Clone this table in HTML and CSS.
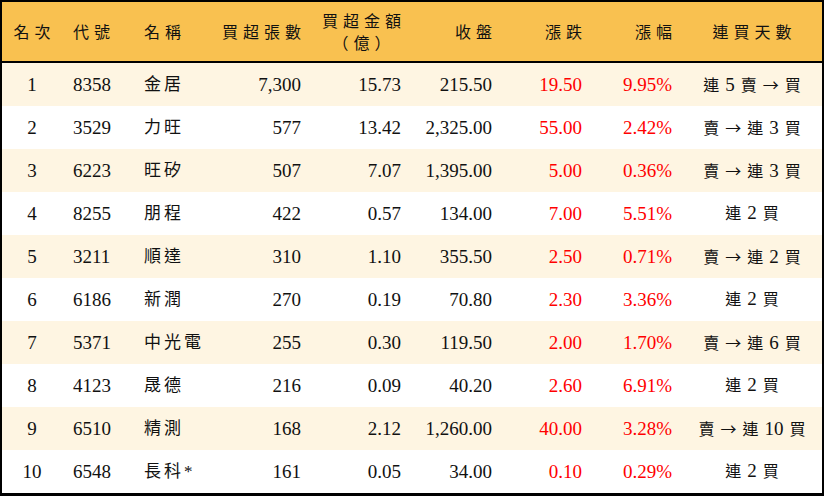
FILE: index.html
```html
<!DOCTYPE html>
<html lang="zh-Hant">
<head>
<meta charset="utf-8">
<link rel="stylesheet" href="styles.css">
</head>
<body>
<table class="rank">
  <colgroup>
    <col class="c1"><col class="c2"><col class="c3"><col class="c4"><col class="c5"><col class="c6"><col class="c7"><col class="c8"><col class="c9">
  </colgroup>
  <thead>
    <tr>
      <th class="ctr"><span class="hl">名次</span></th>
      <th class="lft"><span class="hl">代號</span></th>
      <th class="lft"><span class="hl">名稱</span></th>
      <th class="rgt"><span class="hl">買超張數</span></th>
      <th class="rgt"><span class="two"><span class="hl">買超金額</span><span class="sub">（億）</span></span></th>
      <th class="rgt"><span class="hl">收盤</span></th>
      <th class="rgt"><span class="hl">漲跌</span></th>
      <th class="rgt"><span class="hl">漲幅</span></th>
      <th class="ctr"><span class="hl">連買天數</span></th>
    </tr>
  </thead>
  <tbody>
    <tr class="odd"><td class="ctr">1</td><td class="lft">8358</td><td class="lft cjk">金居</td><td class="rgt">7,300</td><td class="rgt">15.73</td><td class="rgt">215.50</td><td class="rgt up">19.50</td><td class="rgt up">9.95%</td><td class="ctr days">連 <span class="n">5</span> 賣 <span class="arr">→</span> 買</td></tr>
    <tr><td class="ctr">2</td><td class="lft">3529</td><td class="lft cjk">力旺</td><td class="rgt">577</td><td class="rgt">13.42</td><td class="rgt">2,325.00</td><td class="rgt up">55.00</td><td class="rgt up">2.42%</td><td class="ctr days">賣 <span class="arr">→</span> 連 <span class="n">3</span> 買</td></tr>
    <tr class="odd"><td class="ctr">3</td><td class="lft">6223</td><td class="lft cjk">旺矽</td><td class="rgt">507</td><td class="rgt">7.07</td><td class="rgt">1,395.00</td><td class="rgt up">5.00</td><td class="rgt up">0.36%</td><td class="ctr days">賣 <span class="arr">→</span> 連 <span class="n">3</span> 買</td></tr>
    <tr><td class="ctr">4</td><td class="lft">8255</td><td class="lft cjk">朋程</td><td class="rgt">422</td><td class="rgt">0.57</td><td class="rgt">134.00</td><td class="rgt up">7.00</td><td class="rgt up">5.51%</td><td class="ctr days">連 <span class="n">2</span> 買</td></tr>
    <tr class="odd"><td class="ctr">5</td><td class="lft">3211</td><td class="lft cjk">順達</td><td class="rgt">310</td><td class="rgt">1.10</td><td class="rgt">355.50</td><td class="rgt up">2.50</td><td class="rgt up">0.71%</td><td class="ctr days">賣 <span class="arr">→</span> 連 <span class="n">2</span> 買</td></tr>
    <tr><td class="ctr">6</td><td class="lft">6186</td><td class="lft cjk">新潤</td><td class="rgt">270</td><td class="rgt">0.19</td><td class="rgt">70.80</td><td class="rgt up">2.30</td><td class="rgt up">3.36%</td><td class="ctr days">連 <span class="n">2</span> 買</td></tr>
    <tr class="odd"><td class="ctr">7</td><td class="lft">5371</td><td class="lft cjk">中光電</td><td class="rgt">255</td><td class="rgt">0.30</td><td class="rgt">119.50</td><td class="rgt up">2.00</td><td class="rgt up">1.70%</td><td class="ctr days">賣 <span class="arr">→</span> 連 <span class="n">6</span> 買</td></tr>
    <tr><td class="ctr">8</td><td class="lft">4123</td><td class="lft cjk">晟德</td><td class="rgt">216</td><td class="rgt">0.09</td><td class="rgt">40.20</td><td class="rgt up">2.60</td><td class="rgt up">6.91%</td><td class="ctr days">連 <span class="n">2</span> 買</td></tr>
    <tr class="odd"><td class="ctr">9</td><td class="lft">6510</td><td class="lft cjk">精測</td><td class="rgt">168</td><td class="rgt">2.12</td><td class="rgt">1,260.00</td><td class="rgt up">40.00</td><td class="rgt up">3.28%</td><td class="ctr days">賣 <span class="arr">→</span> 連 <span class="n">10</span> 買</td></tr>
    <tr><td class="ctr">10</td><td class="lft">6548</td><td class="lft cjk">長科*</td><td class="rgt">161</td><td class="rgt">0.05</td><td class="rgt">34.00</td><td class="rgt up">0.10</td><td class="rgt up">0.29%</td><td class="ctr days">連 <span class="n">2</span> 買</td></tr>
  </tbody>
</table>
</body>
</html>
```

FILE: styles.css
```css
html, body {
  margin: 0;
  padding: 0;
  background: #ffffff;
}

.rank {
  width: 824px;
  height: 496px;
  border-collapse: separate;
  border-spacing: 0;
  table-layout: fixed;
  border: 2px solid #000;
  border-bottom-width: 3px;
  box-sizing: border-box;
  font-family: "Liberation Serif", "Noto Sans CJK TC", serif;
  font-size: 19px;
  color: #111;
}

.c1 { width: 60px; }
.c2 { width: 71px; }
.c3 { width: 78px; }
.c4 { width: 100px; }
.c5 { width: 100px; }
.c6 { width: 91px; }
.c7 { width: 90px; }
.c8 { width: 90px; }
.c9 { width: 140px; }

thead th {
  background: #f9c150;
  height: 59px;
  padding: 0;
  border-bottom: 2px solid #000;
  font-family: "Noto Sans CJK TC", sans-serif;
  font-weight: 400;
  font-size: 16px;
  line-height: 19px;
  vertical-align: middle;
}

.hl {
  letter-spacing: 5px;
  margin-right: -5px;
}

.two {
  display: inline-flex;
  flex-direction: column;
  align-items: center;
}

.sub {
  letter-spacing: 5px;
  margin-right: -5px;
  margin-top: 3px;
}

tbody td {
  height: 43px;
  padding: 0;
  vertical-align: middle;
  line-height: 22px;
}

tbody tr.odd td {
  background: #fef5e2;
}

.ctr { text-align: center; }
.lft { text-align: left; padding-left: 11px !important; }
.rgt { text-align: right; padding-right: 10px !important; }

.cjk {
  font-size: 17px;
  letter-spacing: 3px;
}

.up { color: #ff0000; }

.days {
  font-size: 16px;
  word-spacing: 2px;
}

.days .n {
  font-size: 19px;
}

.arr {
  font-family: "Noto Sans CJK TC", sans-serif;
  font-size: 16px;
}
```
